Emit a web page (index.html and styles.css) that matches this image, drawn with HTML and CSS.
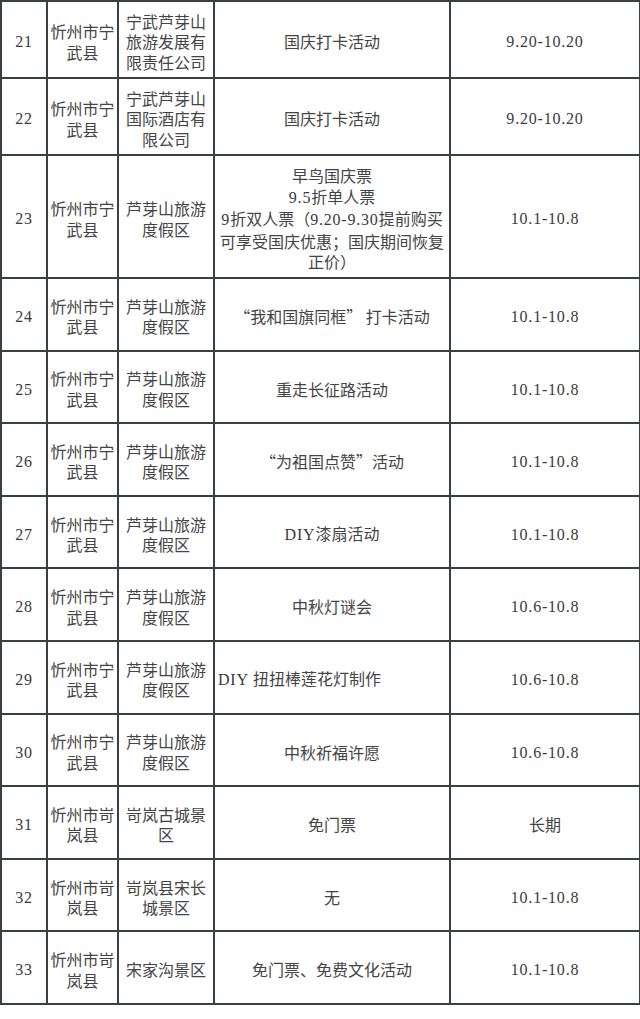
FILE: index.html
```html
<!DOCTYPE html>
<html lang="zh-CN">
<head>
<meta charset="utf-8">
<title>活动表</title>
<link rel="stylesheet" href="styles.css">
</head>
<body>
<table class="grid">
  <colgroup>
    <col class="c-no"><col class="c-city"><col class="c-site"><col class="c-act"><col class="c-date">
  </colgroup>
  <tbody>
    <tr class="row-b">
      <td><span class="num">21</span></td>
      <td>忻州市宁<br>武县</td>
      <td>宁武芦芽山<br>旅游发展有<br>限责任公司</td>
      <td>国庆打卡活动</td>
      <td><span class="num">9.20-10.20</span></td>
    </tr>
    <tr class="row-b">
      <td><span class="num">22</span></td>
      <td>忻州市宁<br>武县</td>
      <td>宁武芦芽山<br>国际酒店有<br>限公司</td>
      <td>国庆打卡活动</td>
      <td><span class="num">9.20-10.20</span></td>
    </tr>
    <tr class="row-c">
      <td><span class="num">23</span></td>
      <td>忻州市宁<br>武县</td>
      <td>芦芽山旅游<br>度假区</td>
      <td>早鸟国庆票<br><span class="num">9.5</span>折单人票<br><span class="num">9</span>折双人票（<span class="num">9.20-9.30</span>提前购买<br>可享受国庆优惠；国庆期间恢复<br>正价）</td>
      <td><span class="num">10.1-10.8</span></td>
    </tr>
    <tr class="row-a">
      <td><span class="num">24</span></td>
      <td>忻州市宁<br>武县</td>
      <td>芦芽山旅游<br>度假区</td>
      <td>“我和国旗同框” 打卡活动</td>
      <td><span class="num">10.1-10.8</span></td>
    </tr>
    <tr class="row-a">
      <td><span class="num">25</span></td>
      <td>忻州市宁<br>武县</td>
      <td>芦芽山旅游<br>度假区</td>
      <td>重走长征路活动</td>
      <td><span class="num">10.1-10.8</span></td>
    </tr>
    <tr class="row-a">
      <td><span class="num">26</span></td>
      <td>忻州市宁<br>武县</td>
      <td>芦芽山旅游<br>度假区</td>
      <td>“为祖国点赞”活动</td>
      <td><span class="num">10.1-10.8</span></td>
    </tr>
    <tr class="row-a">
      <td><span class="num">27</span></td>
      <td>忻州市宁<br>武县</td>
      <td>芦芽山旅游<br>度假区</td>
      <td><span class="num">DIY</span>漆扇活动</td>
      <td><span class="num">10.1-10.8</span></td>
    </tr>
    <tr class="row-a">
      <td><span class="num">28</span></td>
      <td>忻州市宁<br>武县</td>
      <td>芦芽山旅游<br>度假区</td>
      <td>中秋灯谜会</td>
      <td><span class="num">10.6-10.8</span></td>
    </tr>
    <tr class="row-a">
      <td><span class="num">29</span></td>
      <td>忻州市宁<br>武县</td>
      <td>芦芽山旅游<br>度假区</td>
      <td class="left"><span class="num">DIY </span>扭扭棒莲花灯制作</td>
      <td><span class="num">10.6-10.8</span></td>
    </tr>
    <tr class="row-a">
      <td><span class="num">30</span></td>
      <td>忻州市宁<br>武县</td>
      <td>芦芽山旅游<br>度假区</td>
      <td>中秋祈福许愿</td>
      <td><span class="num">10.6-10.8</span></td>
    </tr>
    <tr class="row-a">
      <td><span class="num">31</span></td>
      <td>忻州市岢<br>岚县</td>
      <td>岢岚古城景<br>区</td>
      <td>免门票</td>
      <td>长期</td>
    </tr>
    <tr class="row-a">
      <td><span class="num">32</span></td>
      <td>忻州市岢<br>岚县</td>
      <td>岢岚县宋长<br>城景区</td>
      <td>无</td>
      <td><span class="num">10.1-10.8</span></td>
    </tr>
    <tr class="row-a">
      <td><span class="num">33</span></td>
      <td>忻州市岢<br>岚县</td>
      <td>宋家沟景区</td>
      <td>免门票、免费文化活动</td>
      <td><span class="num">10.1-10.8</span></td>
    </tr>
  </tbody>
</table>
</body>
</html>
```
FILE: styles.css
```css
html, body {
  margin: 0;
  padding: 0;
  background: #ffffff;
}

body {
  font-family: "Noto Sans CJK SC", sans-serif;
  font-size: 16px;
  line-height: 20.5px;
  color: #444444;
  font-weight: 400;
}

.grid {
  border-collapse: collapse;
  table-layout: fixed;
  width: 639px;
  margin: 0;
}

.c-no { width: 46px; }
.c-city { width: 71px; }
.c-site { width: 96px; }
.c-act { width: 236px; }
.c-date { width: 190px; }

.grid td {
  border: 2px solid #3a403f;
  text-align: center;
  vertical-align: middle;
  padding: 4px 0 0;
  white-space: nowrap;
  overflow: visible;
}

.grid td.left {
  text-align: left;
  padding-left: 3px;
}

.row-b { height: 77px; }
.row-c { height: 123px; }
.row-a { height: 72.6px; }

.num {
  font-family: "Liberation Serif", serif;
  font-weight: 400;
  letter-spacing: 0.8px;
  color: #3a3a3a;
}
```
